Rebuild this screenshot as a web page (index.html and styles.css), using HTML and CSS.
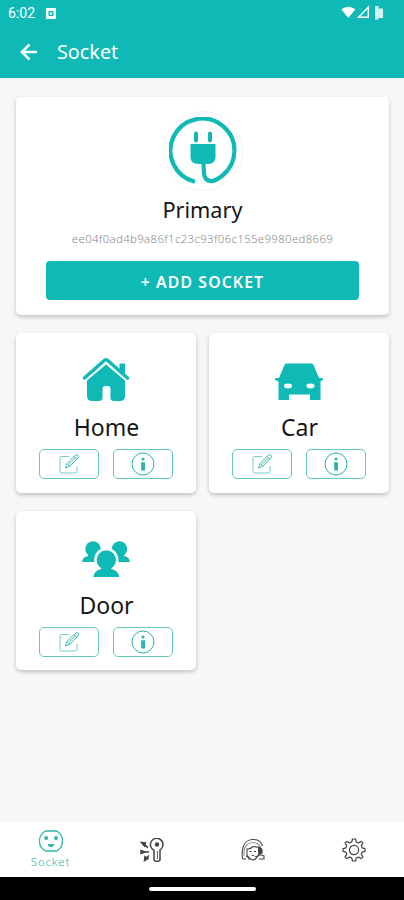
FILE: index.html
```html
<!DOCTYPE html>
<html lang="en">
<head>
    <meta charset="UTF-8">
    <meta name="viewport" content="width=device-width, initial-scale=1.0">
    <title>Socket</title>
    <link rel="stylesheet" href="styles.css">
</head>
<body>
    <!-- shared icons -->
    <svg class="sprite" width="0" height="0">
        <symbol id="edit" viewBox="0 0 22 22">
            <path d="M11 3.500H3.500Q2 3.500 2 5V18.500Q2 20 3.500 20H17Q19 20 19 18V13" fill="none" stroke="currentColor" stroke-width="1" opacity=".65"/>
            <path d="M7.500 15 9 10.500 17.300 2.200Q18.700 1 20.100 2.300 21.200 3.700 20 5L11.800 13.300ZM9 10.500 11.800 13.300M16 3.500 18.700 6.300M10.800 11.500 17.200 5" fill="none" stroke="currentColor" stroke-width=".9"/>
        </symbol>
        <symbol id="info" viewBox="0 0 24 24">
            <circle cx="12" cy="12" r="11" fill="none" stroke="currentColor" stroke-width="1"/>
            <circle cx="12" cy="7" r="1.600" fill="currentColor"/>
            <path d="M10 10.300H14V18.500H10.200V11.500H10Z" fill="currentColor"/>
        </symbol>
    </svg>

    <header class="header">
        <div class="status-bar">
            <span class="time">6:02</span>
            <svg class="status-app" width="10" height="11" viewBox="0 0 10 11">
                <path d="M1 0H9Q10 0 10 1V10Q10 11 9 11H1Q0 11 0 10V1Q0 0 1 0ZM2.500 3V8H7.500V3Z" fill="#fff" fill-rule="evenodd"/>
                <rect x="4" y="4.500" width="2" height="2" fill="#fff"/>
            </svg>
            <svg class="status-icons" width="46" height="16" viewBox="0 0 46 16">
                <path d="M.3 4.300Q7.300-1 14.300 4.300L7.300 13Z" fill="#fff"/>
                <path d="M17.500 12.300H27.300V2.200Z" fill="none" stroke="#fff" stroke-width="1.400"/>
                <path d="M34 1H37.500V3.500H42V13H37.500V14.500H34Z" fill="#fff" opacity=".82"/>
            </svg>
        </div>
        <div class="toolbar">
            <svg class="back" width="18" height="18" viewBox="0 0 18 18">
                <path d="M17 9H2M9.500 1.500 2 9 9.500 16.500" fill="none" stroke="#fff" stroke-width="2.500"/>
            </svg>
            <h1>Socket</h1>
        </div>
    </header>

    <main class="content">
        <section class="card primary-card">
            <div class="avatar">
                <svg width="68" height="68" viewBox="0 0 68 68">
                    <path d="M26 64.700A32 32 0 1 1 53.500 58.500C48 63 42 66 37.500 62.500C33 58.500 36 52 34 45" fill="none" stroke="#0fbab6" stroke-width="4.200"/>
                    <path d="M27 16.500V23.500M41 16.500V23.500" stroke="#0fbab6" stroke-width="4" stroke-linecap="round"/>
                    <path d="M21.500 27H46.500V40Q46.500 47 39 47H29Q21.500 47 21.500 40Z" fill="#0fbab6"/>
                </svg>
            </div>
            <h2 class="primary-name">Primary</h2>
            <p class="socket-id">ee04f0ad4b9a86f1c23c93f06c155e9980ed8669</p>
            <button class="add-button">+ ADD SOCKET</button>
        </section>

        <div class="socket-grid">
            <section class="card socket-card">
                <svg class="socket-icon" width="48" height="46" viewBox="0 0 48 46">
                    <path d="M37.500 6.500H43V18L37.500 13Z" fill="#0fbab6"/>
                    <path d="M2.500 21 22.500 3.300Q24 2.200 25.500 3.300L45.500 21" fill="none" stroke="#0fbab6" stroke-width="3.500" stroke-linecap="round"/>
                    <path d="M5 23.500 24 7.500 43 23.500V39Q43 44 38 44H32Q28.500 44 28.500 41V32Q28.500 29 25.500 29H23.500Q20.500 29 20.500 32V41Q20.500 44 17 44H10Q5 44 5 39Z" fill="#0fbab6"/>
                </svg>
                <h2>Home</h2>
                <div class="actions">
                    <button class="action"><svg width="22" height="22"><use href="#edit"/></svg></button>
                    <button class="action"><svg width="24" height="24"><use href="#info"/></svg></button>
                </div>
            </section>

            <section class="card socket-card">
                <svg class="socket-icon" width="48" height="46" viewBox="0 0 48 46">
                    <path d="M11.500 6.500H36.500Q38 6.500 38.500 8L44 21H47.500Q49 22 46.500 23.500L45.500 24.500V43H35V37.500H14V43H3.500V24.500L1.500 23.500Q-1 22 .5 21H4L9.500 8Q10 6.500 11.500 6.500Z" fill="#0fbab6"/>
                    <ellipse cx="13" cy="29" rx="4" ry="2.400" fill="#fff"/>
                    <ellipse cx="35.500" cy="29" rx="4" ry="2.400" fill="#fff"/>
                </svg>
                <h2>Car</h2>
                <div class="actions">
                    <button class="action"><svg width="22" height="22"><use href="#edit"/></svg></button>
                    <button class="action"><svg width="24" height="24"><use href="#info"/></svg></button>
                </div>
            </section>

            <section class="card socket-card">
                <svg class="socket-icon" width="48" height="46" viewBox="0 0 48 46">
                    <g fill="#0fbab6">
                        <circle cx="11" cy="14" r="7.700"/>
                        <path d="M6 18H16V27H0Q.5 22 6 21Z"/>
                        <circle cx="37.500" cy="14" r="7.700"/>
                        <path d="M42 18H32V27H48Q47.500 22 42 21Z"/>
                    </g>
                    <circle cx="24.300" cy="25" r="9.700" fill="#0fbab6" stroke="#fff" stroke-width="5" paint-order="stroke"/>
                    <path d="M19.300 30H29.300V34Q36 35 37.300 42H11.300Q12.500 35 19.300 34Z" fill="#0fbab6"/>
                </svg>
                <h2>Door</h2>
                <div class="actions">
                    <button class="action"><svg width="22" height="22"><use href="#edit"/></svg></button>
                    <button class="action"><svg width="24" height="24"><use href="#info"/></svg></button>
                </div>
            </section>
        </div>
    </main>

    <nav class="bottom-nav">
        <a class="nav-item active">
            <svg width="24" height="22" viewBox="0 0 24 22">
                <path d="M6.500 1H17.500C25.500 5 25.500 17 17.500 21H6.500C-1.500 17-1.500 5 6.500 1Z" fill="none" stroke="currentColor" stroke-width="1.300"/>
                <circle cx="7.200" cy="8" r="2" fill="currentColor"/>
                <circle cx="17" cy="8" r="2" fill="currentColor"/>
                <path d="M9 14H15V15.500Q12 19 9 15.500Z" fill="currentColor"/>
            </svg>
            <span>Socket</span>
        </a>
        <a class="nav-item">
            <svg width="24" height="24" viewBox="0 0 24 24" fill="none" stroke="currentColor" stroke-width="1.500">
                <path d="M14 12.300A6.300 6.300 0 1 1 20 12V22Q17 25 14 22Z"/>
                <path d="M17.500 13V21" stroke-width=".8"/>
                <circle cx="17" cy="6.500" r="1.500" fill="currentColor"/>
                <path d="M3 6 8 9.500M3 14H9M6 21 9 17.500" stroke-width="1.600"/>
                <path d="M1.500 4.500 5.500 5 4.500 8ZM1 12.500 5 14 1 15.500ZM5 18.500 8 20.500 4.500 22.500Z" fill="currentColor"/>
            </svg>
        </a>
        <a class="nav-item">
            <svg width="24" height="24" viewBox="0 0 24 24" fill="none" stroke="currentColor" stroke-width="1.100">
                <path d="M5 21H2Q1 20 1.200 15C1.500 6 6 1.500 12 1.500 17 1.500 20.500 4 21.500 8"/>
                <path d="M3 18V14C3 8 7 4.500 12 4.500 16 4.500 19 7 19.500 9" opacity=".6"/>
                <path d="M6 17V11Q9 11.500 12 8.500L18 9.500V16Q16 21 12 22 9 21.500 6 17Z"/>
                <path d="M17.500 9Q22 10 21 15L18 16Z" fill="currentColor"/>
                <path d="M8.500 13.500H10.500M13 13.500H15M11 17.500H13M20 16Q18 19 14 18.500M20 17 23 18V21H18M5 18 8 20V22"/>
            </svg>
        </a>
        <a class="nav-item">
            <svg width="24" height="24" viewBox="0 0 24 24" fill="none" stroke="currentColor" stroke-width="1.200">
                <path d="M10.500 1H13.500L14.300 4 16.500 4.900 19.200 3.300 21 5.100 19.300 7.700 20.200 9.900 23 10.700V13.300L20.200 14.100 19.300 16.300 21 18.900 19.200 20.700 16.500 19.100 14.300 20 13.500 23H10.500L9.700 20 7.500 19.100 4.800 20.700 3 18.900 4.700 16.300 3.800 14.100 1 13.300V10.700L3.800 9.900 4.700 7.700 3 5.100 4.800 3.300 7.500 4.900 9.700 4Z" stroke-linejoin="round"/>
                <circle cx="12" cy="12" r="4.600"/>
            </svg>
        </a>
    </nav>
    <div class="gesture-bar"><span class="gesture-handle"></span></div>
</body>
</html>
```
FILE: styles.css
```css
* {
    box-sizing: border-box;
}

body {
    font-family: "Noto Sans", sans-serif;
    background-color: #f7f7f7;
    margin: 0;
    height: 900px;
    display: flex;
    flex-direction: column;
    color: #161616;
}

h1, h2, p {
    margin: 0;
    font-weight: 400;
}

button {
    font-family: inherit;
    padding: 0;
    cursor: pointer;
}

svg {
    display: block;
    flex-shrink: 0;
}

.sprite {
    position: absolute;
}

.header {
    height: 78px;
    background-color: #0fbab6;
    color: #fff;
}

.status-bar {
    display: flex;
    align-items: center;
    height: 26px;
    padding: 0 24px 0 8px;
}

.time {
    font-family: Roboto, sans-serif;
    font-size: 14px;
    width: 38px;
}

.status-icons {
    margin-left: auto;
    margin-right: -7px;
}

.toolbar {
    display: flex;
    align-items: center;
    gap: 19px;
    height: 52px;
    padding-left: 20px;
}

.toolbar h1 {
    font-size: 19.8px;
    line-height: 28px;
}

.content {
    flex: 1;
    padding: 19px 15px 0 16px;
}

.card {
    background-color: #fff;
    border-radius: 5px;
    box-shadow: 0 2px 4px rgba(0, 0, 0, 0.22);
    display: flex;
    flex-direction: column;
    align-items: center;
}

.primary-card {
    height: 218px;
    padding-top: 14px;
}

.avatar {
    width: 80px;
    height: 80px;
    border: 1px solid #f4f4f4;
    border-radius: 50%;
    display: flex;
    align-items: center;
    justify-content: center;
}

.primary-name {
    font-size: 21.7px;
    line-height: 30px;
    margin-top: 4px;
}

.socket-id {
    font-size: 11.4px;
    font-weight: 300;
    line-height: 16px;
    letter-spacing: 0.35px;
    margin-top: 6px;
    color: #888;
}

.add-button {
    width: 313px;
    height: 39px;
    margin-top: 14px;
    padding-top: 2px;
    border: none;
    border-radius: 4px;
    background-color: #0fbab6;
    color: #fff;
    font-size: 15.8px;
    font-weight: 600;
    letter-spacing: 1.1px;
}

.socket-grid {
    display: grid;
    grid-template-columns: 180px 180px;
    gap: 18px 13px;
    margin-top: 18px;
}

.socket-card {
    height: 159.5px;
    padding-top: 24px;
}

.socket-card h2 {
    font-size: 23px;
    line-height: 32px;
    margin-top: 8px;
    margin-left: 1px;
}

.actions {
    display: flex;
    gap: 14px;
    margin-top: 6px;
    margin-right: 1px;
}

.action {
    width: 60px;
    height: 30px;
    border: 1px solid #64c9bd;
    border-radius: 5px;
    background: none;
    color: #2bb3ac;
    display: flex;
    align-items: center;
    justify-content: center;
}

.bottom-nav {
    height: 55px;
    background-color: #fff;
    display: flex;
}

.nav-item {
    flex: 1;
    display: flex;
    flex-direction: column;
    align-items: center;
    justify-content: center;
    color: #444;
}

.nav-item.active {
    color: #32b5ab;
}

.nav-item span {
    font-size: 11.5px;
    font-weight: 300;
    line-height: 16px;
    letter-spacing: 0.8px;
    margin-top: 2px;
}

.gesture-bar {
    height: 23px;
    background-color: #000;
    display: flex;
    align-items: center;
    justify-content: center;
}

.gesture-handle {
    width: 107px;
    height: 4px;
    border-radius: 2px;
    background-color: #fff;
}
```
